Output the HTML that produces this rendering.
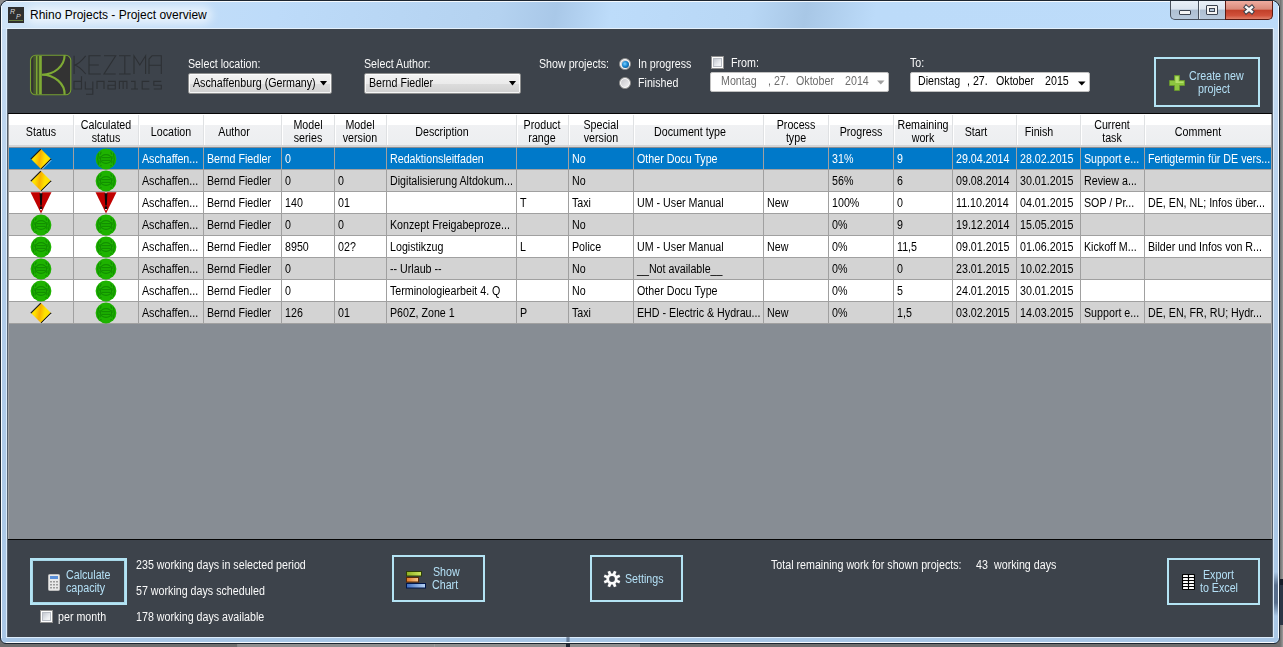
<!DOCTYPE html>
<html><head><meta charset="utf-8">
<style>
*{box-sizing:border-box}
html,body{margin:0;padding:0}
body{width:1283px;height:647px;overflow:hidden;position:relative;background:#8c8c8c;font-family:"Liberation Sans",sans-serif;font-size:12px}
.a{position:absolute}
.t{position:absolute;white-space:nowrap;line-height:13px;transform:scaleX(.89);transform-origin:0 0}
.w{color:#fafafa}
.lb{color:#b4e0f6}
.btn{position:absolute;border:2px solid #b4e4f4;background:#3d434b}
.hc{position:absolute;text-align:center;line-height:13px;color:#000;white-space:nowrap;transform:scaleX(.89);transform-origin:50% 0}
.c{position:absolute;white-space:nowrap;line-height:13px;color:#000;transform:scaleX(.89);transform-origin:0 0}
</style></head><body>

<div class="a" style="left:0;top:638px;width:1283px;height:9px;background:#6e6e6e"></div>
<div class="a" style="left:237px;top:643px;width:403px;height:4px;background:#8e8e8e"></div>
<div class="a" style="left:237px;top:643px;width:1px;height:4px;background:#8a8a8a"></div>
<div class="a" style="left:434px;top:643px;width:1px;height:4px;background:#9a9a9a"></div>
<div class="a" style="left:566px;top:638px;width:4px;height:9px;background:#1e2532"></div>
<div class="a" style="left:1280px;top:0;width:3px;height:647px;background:linear-gradient(90deg,#6e6e6e,#9a9a9a)"></div>
<div class="a" style="left:1280px;top:579px;width:3px;height:6px;background:#151c28"></div>
<div class="a" style="left:1280px;top:585px;width:3px;height:40px;background:#2b3545"></div>
<div class="a" style="left:0;top:0;width:1280px;height:644px;border:1px solid #1c2530;border-radius:8px 8px 6px 6px;background:linear-gradient(100deg,#cfe4f7 0%,#c4def8 10%,#bddbf9 20%,#b4d2f0 36%,#a9c8e8 40%,#bddcfa 44%,#b8d7f5 54%,#a8c7e6 58%,#bcdbf9 63%,#bddcfa 100%)"></div>
<div class="a" style="left:6px;top:1px;width:1268px;height:1px;background:rgba(255,255,255,.85)"></div>
<div class="a" style="left:1px;top:6px;width:1px;height:632px;background:rgba(255,255,255,.85)"></div>
<div class="a" style="left:1278px;top:6px;width:1px;height:632px;background:rgba(255,255,255,.85)"></div>
<div class="a" style="left:6px;top:642px;width:1268px;height:1px;background:rgba(255,255,255,.9)"></div>
<div class="a" style="left:26px;top:6px;width:186px;height:18px;border-radius:9px;background:rgba(255,255,255,.6);filter:blur(4px)"></div>
<div class="a" style="left:2px;top:29px;width:4px;height:609px;background:linear-gradient(180deg,#c6dcf2,#b2cdea 40%,#a9c7e6 100%)"></div>
<div class="a" style="left:1274px;top:29px;width:4px;height:609px;background:linear-gradient(180deg,#c6dcf2,#b2cdea 40%,#a9c7e6 100%)"></div>
<div class="a" style="left:6px;top:29px;width:1px;height:609px;background:#dcecfb"></div>
<div class="a" style="left:1273px;top:29px;width:1px;height:609px;background:#dcecfb"></div>
<div class="a" style="left:2px;top:638px;width:1276px;height:4px;background:#a7c6e6;border-radius:0 0 5px 5px"></div>
<div class="a" style="left:6px;top:637px;width:1268px;height:1px;background:#dcecfb"></div>
<div class="a" style="left:1274px;top:572px;width:4px;height:44px;background:linear-gradient(180deg,rgba(60,80,110,0),rgba(60,80,110,.75) 30%,rgba(60,80,110,.75) 70%,rgba(60,80,110,0))"></div>
<div class="a" style="left:566px;top:636px;width:4px;height:6px;background:linear-gradient(90deg,rgba(40,55,80,.2),rgba(40,55,80,.6),rgba(40,55,80,.2))"></div>
<div class="a" style="left:8px;top:7px;width:16px;height:16px;background:#2f2f2f"></div>
<div class="t" style="left:10px;top:5px;font-size:7px;font-style:italic;color:#ddd;transform:none">R</div>
<div class="t" style="left:16px;top:10px;font-size:7px;font-style:italic;color:#ddd;transform:none">P</div>
<div class="a" style="left:9px;top:20px;width:14px;height:1px;background:#6a8040"></div>
<div class="t" style="left:30px;top:9px;font-size:12px;transform:none;color:#000">Rhino Projects - Project overview</div>
<div class="a" style="left:1170px;top:1px;width:56px;height:19px;border:1px solid #48505c;border-top:none;border-radius:0 0 0 5px;background:linear-gradient(180deg,#e9f0f8 0%,#dbe5f0 45%,#aebfd2 50%,#b8c9dc 100%)"></div>
<div class="a" style="left:1198px;top:1px;width:1px;height:18px;background:#48505c"></div>
<div class="a" style="left:1199px;top:1px;width:1px;height:18px;background:rgba(255,255,255,.6)"></div>
<div class="a" style="left:1179px;top:10px;width:12px;height:5px;border:1px solid #3b4350;border-radius:1px;background:#f4f4f4"></div>
<div class="a" style="left:1206px;top:5px;width:12px;height:10px;border:1px solid #3b4350;border-radius:1px;background:#f4f4f4"></div>
<div class="a" style="left:1209px;top:8px;width:6px;height:4px;border:1px solid #3b4350;background:#b8c8da"></div>
<div class="a" style="left:1225px;top:1px;width:48px;height:19px;border:1px solid #5a1a12;border-top:none;border-radius:0 0 5px 0;background:linear-gradient(180deg,#eeaca0 0%,#d98a7a 45%,#c2402a 52%,#d0503a 80%,#e0806a 100%)"></div>
<svg class="a" style="left:1242px;top:4px" width="14" height="12" viewBox="0 0 14 12"><path d="M4.2 3.2 L9.8 7.8 M9.8 3.2 L4.2 7.8" stroke="#3a3f4a" stroke-width="4.4" stroke-linecap="square"/><path d="M4.2 3.2 L9.8 7.8 M9.8 3.2 L4.2 7.8" stroke="#f8f8f8" stroke-width="2.5" stroke-linecap="square"/></svg>
<div class="a" style="left:6px;top:28px;width:1268px;height:1px;background:#e4f0fb"></div>
<div class="a" style="left:7px;top:29px;width:1266px;height:608px;background:#3d434b;border-left:1px solid #56606c;border-right:1px solid #56606c"></div>
<div class="a" style="left:8px;top:113px;width:1264px;height:1px;background:#050505"></div>
<div class="a" style="left:8px;top:114px;width:1264px;height:425px;background:#878d94;border-left:1px solid #a0a0a0;border-right:1px solid #a0a0a0"></div>
<div class="a" style="left:8px;top:539px;width:1264px;height:1px;background:#050505"></div>
<svg class="a" style="left:26px;top:50px" width="50" height="50" viewBox="0 0 50 50">
<rect x="4.5" y="5.3" width="40.3" height="39.5" rx="5" fill="#333" stroke="#76a030" stroke-width="1.1"/>
<rect x="7.6" y="5.8" width="1" height="38.5" fill="#506c2a"/>
<rect x="9.7" y="5.8" width="1.9" height="38.5" fill="#79a532"/>
<rect x="12.3" y="5.8" width="0.8" height="38.5" fill="#4a6426"/>
<rect x="13.1" y="5.8" width="2.7" height="38.5" fill="#7eaa34"/>
<path d="M38.6 5.3 A22.8 19.4 0 0 1 15.8 24.7 A22.8 19.4 0 0 1 38.6 44.8" stroke="#7eaa34" stroke-width="2.1" fill="none"/>
</svg>
<svg class="a" style="left:70px;top:50px" width="96" height="48" viewBox="0 0 96 48">
<g stroke="#2d3034" stroke-width="1.1" fill="none">
<path d="M4.1 5.8 V24 M15.7 5.8 Q9 14 4.6 15 Q9 16 15.7 24"/>
<path d="M30.7 5.8 H19 V24 H30.7 M19 15 H28.8"/>
<path d="M34 5.8 H45.7 L34 24 H45.7"/>
<path d="M49 5.8 H60.6 M54.8 5.8 V24 M49 24 H60.6"/>
<path d="M64 24 V5.8 L69.8 15 L75.6 5.8 V24"/>
<path d="M79 24 V9 L82 5.8 H91.3 V24 M79 15.3 H91.3"/>
<path d="M4 31.4 H11.5 V39 H4 Z M11.5 26.2 V31.4"/>
<path d="M15.3 31.4 V39 H22.8 M22.8 31.4 V44.2 H16"/>
<path d="M27 39 V31.4 H34 V39"/>
<path d="M38 31.4 H45.3 V39 H38 V35.2 H45.3"/>
<path d="M49.4 39 V31.4 H56.9 V39 M53.15 31.4 V39"/>
<path d="M61 31.4 H65 V39 M61 39 H68"/>
<path d="M79.3 31.4 H72.2 V39 H79.3"/>
<path d="M91.3 31.4 H83.8 V35.2 H91.3 V39 H83.8"/>
</g>
</svg>
<div class="t w" style="left:188px;top:58px">Select location:</div>
<div class="t w" style="left:364px;top:58px">Select Author:</div>
<div class="t w" style="left:539px;top:58px">Show projects:</div>
<div class="t w" style="left:638px;top:58px">In progress</div>
<div class="t w" style="left:638px;top:77px">Finished</div>
<div class="t w" style="left:731px;top:57px">From:</div>
<div class="t w" style="left:910px;top:57px">To:</div>
<div class="a" style="left:188px;top:73px;width:144px;height:21px;border:1px solid #8e8f8f;border-radius:2px;background:linear-gradient(180deg,#f3f3f3 0%,#ebebeb 50%,#dddddd 51%,#d0d0d0 100%);box-shadow:inset 0 0 0 1px rgba(255,255,255,.8)"></div><div class="c" style="left:193px;top:77px">Aschaffenburg (Germany)</div><svg class="a" style="left:320px;top:81px" width="8" height="5" viewBox="0 0 8 5"><path d="M0 0 H7 L3.5 4.5 Z" fill="#000"/></svg>
<div class="a" style="left:364px;top:73px;width:157px;height:21px;border:1px solid #8e8f8f;border-radius:2px;background:linear-gradient(180deg,#f3f3f3 0%,#ebebeb 50%,#dddddd 51%,#d0d0d0 100%);box-shadow:inset 0 0 0 1px rgba(255,255,255,.8)"></div><div class="c" style="left:369px;top:77px">Bernd Fiedler</div><svg class="a" style="left:509px;top:81px" width="8" height="5" viewBox="0 0 8 5"><path d="M0 0 H7 L3.5 4.5 Z" fill="#000"/></svg>
<div class="a" style="left:619px;top:58px;width:12px;height:12px;border-radius:50%;border:1px solid #8a8a8a;background:#fdfdfd"></div><div class="a" style="left:621px;top:60px;width:8px;height:8px;border-radius:50%;background:linear-gradient(135deg,#c8c8cc,#f0f0f2)"></div><div class="a" style="left:621.5px;top:60.5px;width:7px;height:7px;border-radius:50%;background:radial-gradient(circle at 40% 40%,#7ad0ff 0,#1a86d0 45%,#0a3f70 100%)"></div>
<div class="a" style="left:619px;top:77px;width:12px;height:12px;border-radius:50%;border:1px solid #8a8a8a;background:#fdfdfd"></div><div class="a" style="left:621px;top:79px;width:8px;height:8px;border-radius:50%;background:linear-gradient(135deg,#c8c8cc,#f0f0f2)"></div>
<div class="a" style="left:711px;top:56px;width:13px;height:13px;border:1px solid #8f8f8f;background:#fff"></div><div class="a" style="left:713px;top:58px;width:9px;height:9px;border:1px solid #b9bdc4;background:linear-gradient(135deg,#c4c8d0,#eef0f3 70%,#f6f6f6)"></div>
<div class="a" style="left:710px;top:72px;width:179px;height:20px;background:#fff;border:1px solid #c0c0c0;border-radius:2px"></div>
<div class="c" style="left:721px;top:75px;color:#6d6d6d">Montag</div>
<div class="c" style="left:768px;top:75px;color:#6d6d6d">, 27.</div>
<div class="c" style="left:796px;top:75px;color:#6d6d6d">Oktober</div>
<div class="c" style="left:845px;top:75px;color:#6d6d6d">2014</div>
<svg class="a" style="left:877px;top:80px" width="8" height="5" viewBox="0 0 8 5"><path d="M0 0.5 H7.5 L3.75 4.5 Z" fill="#a0a0a0"/></svg>
<div class="a" style="left:910px;top:72px;width:180px;height:20px;background:#fff;border:1px solid #c0c0c0;border-radius:2px"></div>
<div class="c" style="left:918px;top:75px">Dienstag</div>
<div class="c" style="left:967px;top:75px">, 27.</div>
<div class="c" style="left:996px;top:75px">Oktober</div>
<div class="c" style="left:1045px;top:75px">2015</div>
<svg class="a" style="left:1078px;top:81px" width="8" height="5" viewBox="0 0 8 5"><path d="M0 0.5 H7.5 L3.75 4.5 Z" fill="#000"/></svg>
<div class="btn" style="left:1154px;top:57px;width:106px;height:50px"></div>
<svg class="a" style="left:1169px;top:75px" width="16" height="16" viewBox="0 0 16 16"><path d="M5.5 0.5 H10.5 V5.5 H15.5 V10.5 H10.5 V15.5 H5.5 V10.5 H0.5 V5.5 H5.5 Z" fill="#8dc63f" stroke="#6a9a2a" stroke-width="0.8"/><path d="M6.5 1.5 H9.5 V6.5 H14.5 V8 H6.5 Z" fill="#b5e06a"/></svg>
<div class="t lb" style="left:1189px;top:70px">Create new</div>
<div class="t lb" style="left:1198px;top:83px">project</div>
<div class="a" style="left:9px;top:114px;width:1262px;height:33px;background:linear-gradient(180deg,#ffffff 0%,#ffffff 33%,#f0f1f3 34%,#eceef0 100%)"></div>
<div class="a" style="left:9px;top:145px;width:1262px;height:2px;background:#d5d5d5"></div>
<div class="a" style="left:73px;top:115px;width:1px;height:30px;background:#dfe1e3"></div>
<div class="a" style="left:74px;top:115px;width:1px;height:30px;background:#fff"></div>
<div class="a" style="left:138px;top:115px;width:1px;height:30px;background:#dfe1e3"></div>
<div class="a" style="left:139px;top:115px;width:1px;height:30px;background:#fff"></div>
<div class="a" style="left:203px;top:115px;width:1px;height:30px;background:#dfe1e3"></div>
<div class="a" style="left:204px;top:115px;width:1px;height:30px;background:#fff"></div>
<div class="a" style="left:281px;top:115px;width:1px;height:30px;background:#dfe1e3"></div>
<div class="a" style="left:282px;top:115px;width:1px;height:30px;background:#fff"></div>
<div class="a" style="left:334px;top:115px;width:1px;height:30px;background:#dfe1e3"></div>
<div class="a" style="left:335px;top:115px;width:1px;height:30px;background:#fff"></div>
<div class="a" style="left:386px;top:115px;width:1px;height:30px;background:#dfe1e3"></div>
<div class="a" style="left:387px;top:115px;width:1px;height:30px;background:#fff"></div>
<div class="a" style="left:516px;top:115px;width:1px;height:30px;background:#dfe1e3"></div>
<div class="a" style="left:517px;top:115px;width:1px;height:30px;background:#fff"></div>
<div class="a" style="left:568px;top:115px;width:1px;height:30px;background:#dfe1e3"></div>
<div class="a" style="left:569px;top:115px;width:1px;height:30px;background:#fff"></div>
<div class="a" style="left:633px;top:115px;width:1px;height:30px;background:#dfe1e3"></div>
<div class="a" style="left:634px;top:115px;width:1px;height:30px;background:#fff"></div>
<div class="a" style="left:763px;top:115px;width:1px;height:30px;background:#dfe1e3"></div>
<div class="a" style="left:764px;top:115px;width:1px;height:30px;background:#fff"></div>
<div class="a" style="left:828px;top:115px;width:1px;height:30px;background:#dfe1e3"></div>
<div class="a" style="left:829px;top:115px;width:1px;height:30px;background:#fff"></div>
<div class="a" style="left:893px;top:115px;width:1px;height:30px;background:#dfe1e3"></div>
<div class="a" style="left:894px;top:115px;width:1px;height:30px;background:#fff"></div>
<div class="a" style="left:952px;top:115px;width:1px;height:30px;background:#dfe1e3"></div>
<div class="a" style="left:953px;top:115px;width:1px;height:30px;background:#fff"></div>
<div class="a" style="left:1016px;top:115px;width:1px;height:30px;background:#dfe1e3"></div>
<div class="a" style="left:1017px;top:115px;width:1px;height:30px;background:#fff"></div>
<div class="a" style="left:1080px;top:115px;width:1px;height:30px;background:#dfe1e3"></div>
<div class="a" style="left:1081px;top:115px;width:1px;height:30px;background:#fff"></div>
<div class="a" style="left:1144px;top:115px;width:1px;height:30px;background:#dfe1e3"></div>
<div class="a" style="left:1145px;top:115px;width:1px;height:30px;background:#fff"></div>
<div class="hc" style="left:-29.5px;top:126px;width:140px">Status</div>
<div class="hc" style="left:35.5px;top:119px;width:140px">Calculated<br>status</div>
<div class="hc" style="left:100.5px;top:126px;width:140px">Location</div>
<div class="hc" style="left:163.5px;top:126px;width:140px">Author</div>
<div class="hc" style="left:237.5px;top:119px;width:140px">Model<br>series</div>
<div class="hc" style="left:290.0px;top:119px;width:140px">Model<br>version</div>
<div class="hc" style="left:372.4px;top:126px;width:140px">Description</div>
<div class="hc" style="left:472.0px;top:119px;width:140px">Product<br>range</div>
<div class="hc" style="left:530.5px;top:119px;width:140px">Special<br>version</div>
<div class="hc" style="left:619.6px;top:126px;width:140px">Document type</div>
<div class="hc" style="left:725.5px;top:119px;width:140px">Process<br>type</div>
<div class="hc" style="left:790.5px;top:126px;width:140px">Progress</div>
<div class="hc" style="left:852.5px;top:119px;width:140px">Remaining<br>work</div>
<div class="hc" style="left:905.5px;top:126px;width:140px">Start</div>
<div class="hc" style="left:969.0px;top:126px;width:140px">Finish</div>
<div class="hc" style="left:1042.0px;top:119px;width:140px">Current<br>task</div>
<div class="hc" style="left:1128.0px;top:126px;width:140px">Comment</div>
<div class="a" style="left:9px;top:148px;width:1262px;height:21px;background:#0079c9"></div>
<div class="a" style="left:9px;top:169px;width:1262px;height:1px;background:#a0a0a0"></div>
<svg class="a" style="left:30.0px;top:147.5px" width="22" height="22" viewBox="0 0 22 22"><defs><linearGradient id="yg41158" x1="0" y1="0" x2="1" y2="0.15"><stop offset="0.25" stop-color="#ffe200"/><stop offset=".5" stop-color="#f8b000"/><stop offset=".75" stop-color="#ffe200"/></linearGradient></defs><path d="M11 1 L21 11 L11 21 L1 11 Z" fill="url(#yg41158)"/><path d="M0.8 11.2 L10.8 1.2" stroke="#1a1a1a" stroke-width="1.2" fill="none"/><path d="M11.2 20.8 L21.2 10.8" stroke="#1a1a1a" stroke-width="1.2" fill="none"/><path d="M12.2 21.2 L21.2 12.2" stroke="#ffffff" stroke-width="0.9" fill="none" opacity=".8"/></svg>
<svg class="a" style="left:95.0px;top:147.5px" width="22" height="22" viewBox="0 0 22 22"><circle cx="11" cy="11" r="10.4" fill="#1eb300"/><g fill="none" stroke="#128f00" stroke-width="1.2"><ellipse cx="11" cy="11" rx="5.6" ry="4.4"/><path d="M6.5 9.6 H15.5 M6.5 12.4 H15.5"/><path d="M3.6 5.2 Q1.8 11 3.6 16.8 M18.4 5.2 Q20.2 11 18.4 16.8"/><path d="M6.2 3.6 Q3.6 11 6.2 18.4 M15.8 3.6 Q18.4 11 15.8 18.4" stroke-dasharray="3 1.5"/></g></svg>
<div class="c" style="left:142px;top:153px;color:#fff">Aschaffen...</div>
<div class="c" style="left:207px;top:153px;color:#fff">Bernd Fiedler</div>
<div class="c" style="left:285px;top:153px;color:#fff">0</div>
<div class="c" style="left:390px;top:153px;color:#fff">Redaktionsleitfaden</div>
<div class="c" style="left:572px;top:153px;color:#fff">No</div>
<div class="c" style="left:637px;top:153px;color:#fff">Other Docu Type</div>
<div class="c" style="left:832px;top:153px;color:#fff">31%</div>
<div class="c" style="left:897px;top:153px;color:#fff">9</div>
<div class="c" style="left:956px;top:153px;color:#fff">29.04.2014</div>
<div class="c" style="left:1020px;top:153px;color:#fff">28.02.2015</div>
<div class="c" style="left:1084px;top:153px;color:#fff">Support e...</div>
<div class="c" style="left:1148px;top:153px;color:#fff">Fertigtermin für DE vers...</div>
<div class="a" style="left:9px;top:170px;width:1262px;height:21px;background:#d3d3d3"></div>
<div class="a" style="left:9px;top:191px;width:1262px;height:1px;background:#a0a0a0"></div>
<svg class="a" style="left:30.0px;top:169.5px" width="22" height="22" viewBox="0 0 22 22"><defs><linearGradient id="yg41180" x1="0" y1="0" x2="1" y2="0.15"><stop offset="0.25" stop-color="#ffe200"/><stop offset=".5" stop-color="#f8b000"/><stop offset=".75" stop-color="#ffe200"/></linearGradient></defs><path d="M11 1 L21 11 L11 21 L1 11 Z" fill="url(#yg41180)"/><path d="M0.8 11.2 L10.8 1.2" stroke="#1a1a1a" stroke-width="1.2" fill="none"/><path d="M11.2 20.8 L21.2 10.8" stroke="#1a1a1a" stroke-width="1.2" fill="none"/><path d="M12.2 21.2 L21.2 12.2" stroke="#ffffff" stroke-width="0.9" fill="none" opacity=".8"/></svg>
<svg class="a" style="left:95.0px;top:169.5px" width="22" height="22" viewBox="0 0 22 22"><circle cx="11" cy="11" r="10.4" fill="#1eb300"/><g fill="none" stroke="#128f00" stroke-width="1.2"><ellipse cx="11" cy="11" rx="5.6" ry="4.4"/><path d="M6.5 9.6 H15.5 M6.5 12.4 H15.5"/><path d="M3.6 5.2 Q1.8 11 3.6 16.8 M18.4 5.2 Q20.2 11 18.4 16.8"/><path d="M6.2 3.6 Q3.6 11 6.2 18.4 M15.8 3.6 Q18.4 11 15.8 18.4" stroke-dasharray="3 1.5"/></g></svg>
<div class="c" style="left:142px;top:175px;color:#000">Aschaffen...</div>
<div class="c" style="left:207px;top:175px;color:#000">Bernd Fiedler</div>
<div class="c" style="left:285px;top:175px;color:#000">0</div>
<div class="c" style="left:338px;top:175px;color:#000">0</div>
<div class="c" style="left:390px;top:175px;color:#000">Digitalisierung Altdokum...</div>
<div class="c" style="left:572px;top:175px;color:#000">No</div>
<div class="c" style="left:832px;top:175px;color:#000">56%</div>
<div class="c" style="left:897px;top:175px;color:#000">6</div>
<div class="c" style="left:956px;top:175px;color:#000">09.08.2014</div>
<div class="c" style="left:1020px;top:175px;color:#000">30.01.2015</div>
<div class="c" style="left:1084px;top:175px;color:#000">Review a...</div>
<div class="a" style="left:9px;top:192px;width:1262px;height:21px;background:#ffffff"></div>
<div class="a" style="left:9px;top:213px;width:1262px;height:1px;background:#a0a0a0"></div>
<svg class="a" style="left:30.0px;top:191.5px" width="22" height="22" viewBox="0 0 22 22"><path d="M0.5 0.3 H21.5 L11 21.5 Z" fill="#c00000"/><path d="M9.6 1 H12.4 L11.8 13.5 H10.2 Z" fill="#0a0a0a"/><rect x="9.9" y="0.3" width="2.2" height="0.9" fill="#f0d0d0"/><rect x="9.8" y="14.4" width="2.4" height="2.6" fill="#0a0a0a"/><rect x="10" y="17" width="2" height="1.2" fill="#f0d0d0"/></svg>
<svg class="a" style="left:95.0px;top:191.5px" width="22" height="22" viewBox="0 0 22 22"><path d="M0.5 0.3 H21.5 L11 21.5 Z" fill="#c00000"/><path d="M9.6 1 H12.4 L11.8 13.5 H10.2 Z" fill="#0a0a0a"/><rect x="9.9" y="0.3" width="2.2" height="0.9" fill="#f0d0d0"/><rect x="9.8" y="14.4" width="2.4" height="2.6" fill="#0a0a0a"/><rect x="10" y="17" width="2" height="1.2" fill="#f0d0d0"/></svg>
<div class="c" style="left:142px;top:197px;color:#000">Aschaffen...</div>
<div class="c" style="left:207px;top:197px;color:#000">Bernd Fiedler</div>
<div class="c" style="left:285px;top:197px;color:#000">140</div>
<div class="c" style="left:338px;top:197px;color:#000">01</div>
<div class="c" style="left:520px;top:197px;color:#000">T</div>
<div class="c" style="left:572px;top:197px;color:#000">Taxi</div>
<div class="c" style="left:637px;top:197px;color:#000">UM - User Manual</div>
<div class="c" style="left:767px;top:197px;color:#000">New</div>
<div class="c" style="left:832px;top:197px;color:#000">100%</div>
<div class="c" style="left:897px;top:197px;color:#000">0</div>
<div class="c" style="left:956px;top:197px;color:#000">11.10.2014</div>
<div class="c" style="left:1020px;top:197px;color:#000">04.01.2015</div>
<div class="c" style="left:1084px;top:197px;color:#000">SOP / Pr...</div>
<div class="c" style="left:1148px;top:197px;color:#000">DE, EN, NL; Infos über...</div>
<div class="a" style="left:9px;top:214px;width:1262px;height:21px;background:#d3d3d3"></div>
<div class="a" style="left:9px;top:235px;width:1262px;height:1px;background:#a0a0a0"></div>
<svg class="a" style="left:30.0px;top:213.5px" width="22" height="22" viewBox="0 0 22 22"><circle cx="11" cy="11" r="10.4" fill="#1eb300"/><g fill="none" stroke="#128f00" stroke-width="1.2"><ellipse cx="11" cy="11" rx="5.6" ry="4.4"/><path d="M6.5 9.6 H15.5 M6.5 12.4 H15.5"/><path d="M3.6 5.2 Q1.8 11 3.6 16.8 M18.4 5.2 Q20.2 11 18.4 16.8"/><path d="M6.2 3.6 Q3.6 11 6.2 18.4 M15.8 3.6 Q18.4 11 15.8 18.4" stroke-dasharray="3 1.5"/></g></svg>
<svg class="a" style="left:95.0px;top:213.5px" width="22" height="22" viewBox="0 0 22 22"><circle cx="11" cy="11" r="10.4" fill="#1eb300"/><g fill="none" stroke="#128f00" stroke-width="1.2"><ellipse cx="11" cy="11" rx="5.6" ry="4.4"/><path d="M6.5 9.6 H15.5 M6.5 12.4 H15.5"/><path d="M3.6 5.2 Q1.8 11 3.6 16.8 M18.4 5.2 Q20.2 11 18.4 16.8"/><path d="M6.2 3.6 Q3.6 11 6.2 18.4 M15.8 3.6 Q18.4 11 15.8 18.4" stroke-dasharray="3 1.5"/></g></svg>
<div class="c" style="left:142px;top:219px;color:#000">Aschaffen...</div>
<div class="c" style="left:207px;top:219px;color:#000">Bernd Fiedler</div>
<div class="c" style="left:285px;top:219px;color:#000">0</div>
<div class="c" style="left:338px;top:219px;color:#000">0</div>
<div class="c" style="left:390px;top:219px;color:#000">Konzept Freigabeproze...</div>
<div class="c" style="left:572px;top:219px;color:#000">No</div>
<div class="c" style="left:832px;top:219px;color:#000">0%</div>
<div class="c" style="left:897px;top:219px;color:#000">9</div>
<div class="c" style="left:956px;top:219px;color:#000">19.12.2014</div>
<div class="c" style="left:1020px;top:219px;color:#000">15.05.2015</div>
<div class="a" style="left:9px;top:236px;width:1262px;height:21px;background:#ffffff"></div>
<div class="a" style="left:9px;top:257px;width:1262px;height:1px;background:#a0a0a0"></div>
<svg class="a" style="left:30.0px;top:235.5px" width="22" height="22" viewBox="0 0 22 22"><circle cx="11" cy="11" r="10.4" fill="#1eb300"/><g fill="none" stroke="#128f00" stroke-width="1.2"><ellipse cx="11" cy="11" rx="5.6" ry="4.4"/><path d="M6.5 9.6 H15.5 M6.5 12.4 H15.5"/><path d="M3.6 5.2 Q1.8 11 3.6 16.8 M18.4 5.2 Q20.2 11 18.4 16.8"/><path d="M6.2 3.6 Q3.6 11 6.2 18.4 M15.8 3.6 Q18.4 11 15.8 18.4" stroke-dasharray="3 1.5"/></g></svg>
<svg class="a" style="left:95.0px;top:235.5px" width="22" height="22" viewBox="0 0 22 22"><circle cx="11" cy="11" r="10.4" fill="#1eb300"/><g fill="none" stroke="#128f00" stroke-width="1.2"><ellipse cx="11" cy="11" rx="5.6" ry="4.4"/><path d="M6.5 9.6 H15.5 M6.5 12.4 H15.5"/><path d="M3.6 5.2 Q1.8 11 3.6 16.8 M18.4 5.2 Q20.2 11 18.4 16.8"/><path d="M6.2 3.6 Q3.6 11 6.2 18.4 M15.8 3.6 Q18.4 11 15.8 18.4" stroke-dasharray="3 1.5"/></g></svg>
<div class="c" style="left:142px;top:241px;color:#000">Aschaffen...</div>
<div class="c" style="left:207px;top:241px;color:#000">Bernd Fiedler</div>
<div class="c" style="left:285px;top:241px;color:#000">8950</div>
<div class="c" style="left:338px;top:241px;color:#000">02?</div>
<div class="c" style="left:390px;top:241px;color:#000">Logistikzug</div>
<div class="c" style="left:520px;top:241px;color:#000">L</div>
<div class="c" style="left:572px;top:241px;color:#000">Police</div>
<div class="c" style="left:637px;top:241px;color:#000">UM - User Manual</div>
<div class="c" style="left:767px;top:241px;color:#000">New</div>
<div class="c" style="left:832px;top:241px;color:#000">0%</div>
<div class="c" style="left:897px;top:241px;color:#000">11,5</div>
<div class="c" style="left:956px;top:241px;color:#000">09.01.2015</div>
<div class="c" style="left:1020px;top:241px;color:#000">01.06.2015</div>
<div class="c" style="left:1084px;top:241px;color:#000">Kickoff M...</div>
<div class="c" style="left:1148px;top:241px;color:#000">Bilder und Infos von R...</div>
<div class="a" style="left:9px;top:258px;width:1262px;height:21px;background:#d3d3d3"></div>
<div class="a" style="left:9px;top:279px;width:1262px;height:1px;background:#a0a0a0"></div>
<svg class="a" style="left:30.0px;top:257.5px" width="22" height="22" viewBox="0 0 22 22"><circle cx="11" cy="11" r="10.4" fill="#1eb300"/><g fill="none" stroke="#128f00" stroke-width="1.2"><ellipse cx="11" cy="11" rx="5.6" ry="4.4"/><path d="M6.5 9.6 H15.5 M6.5 12.4 H15.5"/><path d="M3.6 5.2 Q1.8 11 3.6 16.8 M18.4 5.2 Q20.2 11 18.4 16.8"/><path d="M6.2 3.6 Q3.6 11 6.2 18.4 M15.8 3.6 Q18.4 11 15.8 18.4" stroke-dasharray="3 1.5"/></g></svg>
<svg class="a" style="left:95.0px;top:257.5px" width="22" height="22" viewBox="0 0 22 22"><circle cx="11" cy="11" r="10.4" fill="#1eb300"/><g fill="none" stroke="#128f00" stroke-width="1.2"><ellipse cx="11" cy="11" rx="5.6" ry="4.4"/><path d="M6.5 9.6 H15.5 M6.5 12.4 H15.5"/><path d="M3.6 5.2 Q1.8 11 3.6 16.8 M18.4 5.2 Q20.2 11 18.4 16.8"/><path d="M6.2 3.6 Q3.6 11 6.2 18.4 M15.8 3.6 Q18.4 11 15.8 18.4" stroke-dasharray="3 1.5"/></g></svg>
<div class="c" style="left:142px;top:263px;color:#000">Aschaffen...</div>
<div class="c" style="left:207px;top:263px;color:#000">Bernd Fiedler</div>
<div class="c" style="left:285px;top:263px;color:#000">0</div>
<div class="c" style="left:390px;top:263px;color:#000">-- Urlaub --</div>
<div class="c" style="left:572px;top:263px;color:#000">No</div>
<div class="c" style="left:637px;top:263px;color:#000">__Not available__</div>
<div class="c" style="left:832px;top:263px;color:#000">0%</div>
<div class="c" style="left:897px;top:263px;color:#000">0</div>
<div class="c" style="left:956px;top:263px;color:#000">23.01.2015</div>
<div class="c" style="left:1020px;top:263px;color:#000">10.02.2015</div>
<div class="a" style="left:9px;top:280px;width:1262px;height:21px;background:#ffffff"></div>
<div class="a" style="left:9px;top:301px;width:1262px;height:1px;background:#a0a0a0"></div>
<svg class="a" style="left:30.0px;top:279.5px" width="22" height="22" viewBox="0 0 22 22"><circle cx="11" cy="11" r="10.4" fill="#1eb300"/><g fill="none" stroke="#128f00" stroke-width="1.2"><ellipse cx="11" cy="11" rx="5.6" ry="4.4"/><path d="M6.5 9.6 H15.5 M6.5 12.4 H15.5"/><path d="M3.6 5.2 Q1.8 11 3.6 16.8 M18.4 5.2 Q20.2 11 18.4 16.8"/><path d="M6.2 3.6 Q3.6 11 6.2 18.4 M15.8 3.6 Q18.4 11 15.8 18.4" stroke-dasharray="3 1.5"/></g></svg>
<svg class="a" style="left:95.0px;top:279.5px" width="22" height="22" viewBox="0 0 22 22"><circle cx="11" cy="11" r="10.4" fill="#1eb300"/><g fill="none" stroke="#128f00" stroke-width="1.2"><ellipse cx="11" cy="11" rx="5.6" ry="4.4"/><path d="M6.5 9.6 H15.5 M6.5 12.4 H15.5"/><path d="M3.6 5.2 Q1.8 11 3.6 16.8 M18.4 5.2 Q20.2 11 18.4 16.8"/><path d="M6.2 3.6 Q3.6 11 6.2 18.4 M15.8 3.6 Q18.4 11 15.8 18.4" stroke-dasharray="3 1.5"/></g></svg>
<div class="c" style="left:142px;top:285px;color:#000">Aschaffen...</div>
<div class="c" style="left:207px;top:285px;color:#000">Bernd Fiedler</div>
<div class="c" style="left:285px;top:285px;color:#000">0</div>
<div class="c" style="left:390px;top:285px;color:#000">Terminologiearbeit 4. Q</div>
<div class="c" style="left:572px;top:285px;color:#000">No</div>
<div class="c" style="left:637px;top:285px;color:#000">Other Docu Type</div>
<div class="c" style="left:832px;top:285px;color:#000">0%</div>
<div class="c" style="left:897px;top:285px;color:#000">5</div>
<div class="c" style="left:956px;top:285px;color:#000">24.01.2015</div>
<div class="c" style="left:1020px;top:285px;color:#000">30.01.2015</div>
<div class="a" style="left:9px;top:302px;width:1262px;height:21px;background:#d3d3d3"></div>
<div class="a" style="left:9px;top:323px;width:1262px;height:1px;background:#a0a0a0"></div>
<svg class="a" style="left:30.0px;top:301.5px" width="22" height="22" viewBox="0 0 22 22"><defs><linearGradient id="yg41312" x1="0" y1="0" x2="1" y2="0.15"><stop offset="0.25" stop-color="#ffe200"/><stop offset=".5" stop-color="#f8b000"/><stop offset=".75" stop-color="#ffe200"/></linearGradient></defs><path d="M11 1 L21 11 L11 21 L1 11 Z" fill="url(#yg41312)"/><path d="M0.8 11.2 L10.8 1.2" stroke="#1a1a1a" stroke-width="1.2" fill="none"/><path d="M11.2 20.8 L21.2 10.8" stroke="#1a1a1a" stroke-width="1.2" fill="none"/><path d="M12.2 21.2 L21.2 12.2" stroke="#ffffff" stroke-width="0.9" fill="none" opacity=".8"/></svg>
<svg class="a" style="left:95.0px;top:301.5px" width="22" height="22" viewBox="0 0 22 22"><circle cx="11" cy="11" r="10.4" fill="#1eb300"/><g fill="none" stroke="#128f00" stroke-width="1.2"><ellipse cx="11" cy="11" rx="5.6" ry="4.4"/><path d="M6.5 9.6 H15.5 M6.5 12.4 H15.5"/><path d="M3.6 5.2 Q1.8 11 3.6 16.8 M18.4 5.2 Q20.2 11 18.4 16.8"/><path d="M6.2 3.6 Q3.6 11 6.2 18.4 M15.8 3.6 Q18.4 11 15.8 18.4" stroke-dasharray="3 1.5"/></g></svg>
<div class="c" style="left:142px;top:307px;color:#000">Aschaffen...</div>
<div class="c" style="left:207px;top:307px;color:#000">Bernd Fiedler</div>
<div class="c" style="left:285px;top:307px;color:#000">126</div>
<div class="c" style="left:338px;top:307px;color:#000">01</div>
<div class="c" style="left:390px;top:307px;color:#000">P60Z, Zone 1</div>
<div class="c" style="left:520px;top:307px;color:#000">P</div>
<div class="c" style="left:572px;top:307px;color:#000">Taxi</div>
<div class="c" style="left:637px;top:307px;color:#000">EHD - Electric &amp; Hydrau...</div>
<div class="c" style="left:767px;top:307px;color:#000">New</div>
<div class="c" style="left:832px;top:307px;color:#000">0%</div>
<div class="c" style="left:897px;top:307px;color:#000">1,5</div>
<div class="c" style="left:956px;top:307px;color:#000">03.02.2015</div>
<div class="c" style="left:1020px;top:307px;color:#000">14.03.2015</div>
<div class="c" style="left:1084px;top:307px;color:#000">Support e...</div>
<div class="c" style="left:1148px;top:307px;color:#000">DE, EN, FR, RU; Hydr...</div>
<div class="a" style="left:73px;top:147px;width:1px;height:177px;background:#a0a0a0"></div>
<div class="a" style="left:138px;top:147px;width:1px;height:177px;background:#a0a0a0"></div>
<div class="a" style="left:203px;top:147px;width:1px;height:177px;background:#a0a0a0"></div>
<div class="a" style="left:281px;top:147px;width:1px;height:177px;background:#a0a0a0"></div>
<div class="a" style="left:334px;top:147px;width:1px;height:177px;background:#a0a0a0"></div>
<div class="a" style="left:386px;top:147px;width:1px;height:177px;background:#a0a0a0"></div>
<div class="a" style="left:516px;top:147px;width:1px;height:177px;background:#a0a0a0"></div>
<div class="a" style="left:568px;top:147px;width:1px;height:177px;background:#a0a0a0"></div>
<div class="a" style="left:633px;top:147px;width:1px;height:177px;background:#a0a0a0"></div>
<div class="a" style="left:763px;top:147px;width:1px;height:177px;background:#a0a0a0"></div>
<div class="a" style="left:828px;top:147px;width:1px;height:177px;background:#a0a0a0"></div>
<div class="a" style="left:893px;top:147px;width:1px;height:177px;background:#a0a0a0"></div>
<div class="a" style="left:952px;top:147px;width:1px;height:177px;background:#a0a0a0"></div>
<div class="a" style="left:1016px;top:147px;width:1px;height:177px;background:#a0a0a0"></div>
<div class="a" style="left:1080px;top:147px;width:1px;height:177px;background:#a0a0a0"></div>
<div class="a" style="left:1144px;top:147px;width:1px;height:177px;background:#a0a0a0"></div>
<div class="btn" style="left:30px;top:558px;width:97px;height:47px;box-shadow:inset 0 0 0 1px #a8d8e8"></div>
<svg class="a" style="left:48px;top:574px" width="12" height="17" viewBox="0 0 12 17">
<rect x="0.5" y="0.5" width="11" height="16" rx="1" fill="#e8e8e8" stroke="#bdbdbd"/>
<rect x="2" y="2" width="8" height="3" fill="#5a8fd8"/>
<g fill="#9a9a9a"><rect x="2" y="7" width="2" height="1.5"/><rect x="5" y="7" width="2" height="1.5"/><rect x="8" y="7" width="2" height="1.5"/>
<rect x="2" y="10" width="2" height="1.5"/><rect x="5" y="10" width="2" height="1.5"/><rect x="8" y="10" width="2" height="1.5"/>
<rect x="2" y="13" width="2" height="1.5"/><rect x="5" y="13" width="2" height="1.5"/><rect x="8" y="13" width="2" height="1.5"/></g>
</svg>
<div class="t lb" style="left:66px;top:569px">Calculate</div>
<div class="t lb" style="left:66px;top:582px">capacity</div>
<div class="a" style="left:40px;top:610px;width:13px;height:13px;border:1px solid #8f8f8f;background:#fff"></div><div class="a" style="left:42px;top:612px;width:9px;height:9px;border:1px solid #b9bdc4;background:linear-gradient(135deg,#c4c8d0,#eef0f3 70%,#f6f6f6)"></div>
<div class="t w" style="left:58px;top:611px">per month</div>
<div class="t w" style="left:136px;top:559px">235 working days in selected period</div>
<div class="t w" style="left:136px;top:585px">57 working days scheduled</div>
<div class="t w" style="left:136px;top:611px">178 working days available</div>
<div class="btn" style="left:392px;top:555px;width:93px;height:47px"></div>
<svg class="a" style="left:405px;top:570px" width="22" height="19" viewBox="0 0 22 19">
<defs><linearGradient id="cg1" x1="0" x2="1"><stop offset="0" stop-color="#8fb020"/><stop offset="1" stop-color="#d0e860"/></linearGradient>
<linearGradient id="cg2" x1="0" x2="1"><stop offset="0" stop-color="#e07a28"/><stop offset="1" stop-color="#f8c890"/></linearGradient>
<linearGradient id="cg3" x1="0" x2="1"><stop offset="0" stop-color="#3e6cc0"/><stop offset="1" stop-color="#b8d4f4"/></linearGradient></defs>
<rect x="1.5" y="1.5" width="15" height="4.5" fill="url(#cg1)" stroke="#2e3e08" stroke-width="1"/>
<rect x="1.5" y="7.5" width="12" height="4.5" fill="url(#cg2)" stroke="#5a2808" stroke-width="1"/>
<rect x="1.5" y="13.5" width="19" height="4.5" fill="url(#cg3)" stroke="#00164a" stroke-width="1"/>
</svg>
<div class="t lb" style="left:433px;top:566px">Show</div>
<div class="t lb" style="left:432px;top:579px">Chart</div>
<div class="btn" style="left:590px;top:555px;width:93px;height:47px"></div>
<svg class="a" style="left:600px;top:568px" width="24" height="22" viewBox="0 0 24 22"><g fill="#fbfbfb"><circle cx="12" cy="11" r="5.6"/><rect x="10.6" y="2.6" width="2.8" height="5" transform="rotate(22.5 12 11)"/><rect x="10.6" y="2.6" width="2.8" height="5" transform="rotate(67.5 12 11)"/><rect x="10.6" y="2.6" width="2.8" height="5" transform="rotate(112.5 12 11)"/><rect x="10.6" y="2.6" width="2.8" height="5" transform="rotate(157.5 12 11)"/><rect x="10.6" y="2.6" width="2.8" height="5" transform="rotate(202.5 12 11)"/><rect x="10.6" y="2.6" width="2.8" height="5" transform="rotate(247.5 12 11)"/><rect x="10.6" y="2.6" width="2.8" height="5" transform="rotate(292.5 12 11)"/><rect x="10.6" y="2.6" width="2.8" height="5" transform="rotate(337.5 12 11)"/></g><circle cx="12" cy="11" r="2.9" fill="#3d434b"/></svg>
<div class="t lb" style="left:625px;top:573px">Settings</div>
<div class="t w" style="left:771px;top:559px">Total remaining work for shown projects:</div>
<div class="t w" style="left:976px;top:559px">43</div>
<div class="t w" style="left:994px;top:559px">working days</div>
<div class="btn" style="left:1167px;top:558px;width:93px;height:47px"></div>
<svg class="a" style="left:1182px;top:574px" width="13" height="16" viewBox="0 0 13 16">
<rect x="0" y="0" width="13" height="16" rx="1" fill="#000"/>
<g fill="#fafafa">
<rect x="1" y="1" width="5" height="2" rx=".6"/><rect x="7" y="1" width="5" height="2" rx=".6"/>
<rect x="1" y="4" width="5" height="2" rx=".6"/><rect x="7" y="4" width="5" height="2" rx=".6"/>
<rect x="1" y="7" width="5" height="2" rx=".6"/><rect x="7" y="7" width="5" height="2" rx=".6"/>
<rect x="1" y="10" width="5" height="2" rx=".6"/><rect x="7" y="10" width="5" height="2" rx=".6"/>
<rect x="1" y="13" width="5" height="2" rx=".6"/><rect x="7" y="13" width="5" height="2" rx=".6"/>
</g></svg>
<div class="t lb" style="left:1203px;top:569px">Export</div>
<div class="t lb" style="left:1200px;top:582px">to Excel</div>
</body></html>
